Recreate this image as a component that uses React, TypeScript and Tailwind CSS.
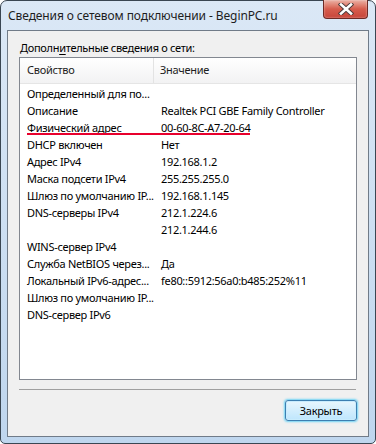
const FONT = "font-['Noto_Sans',sans-serif]";

const ROWS: [string, string][] = [
  ["Определенный для по...", ""],
  ["Описание", "Realtek PCI GBE Family Controller"],
  ["Физический адрес", "00-60-8C-A7-20-64"],
  ["DHCP включен", "Нет"],
  ["Адрес IPv4", "192.168.1.2"],
  ["Маска подсети IPv4", "255.255.255.0"],
  ["Шлюз по умолчанию IP...", "192.168.1.145"],
  ["DNS-серверы IPv4", "212.1.224.6"],
  ["", "212.1.244.6"],
  ["WINS-сервер IPv4", ""],
  ["Служба NetBIOS через...", "Да"],
  ["Локальный IPv6-адрес...", "fe80::5912:56a0:b485:252%11"],
  ["Шлюз по умолчанию IP...", ""],
  ["DNS-сервер IPv6", ""],
];

function CloseButton() {
  return (
    <div className="w-[45px] h-[19px] rounded-b-[4px] border border-t-0 border-[#6d2a25] bg-gradient-to-b from-[#eab1a5] via-[#d65c4d] to-[#c7453a] flex items-center justify-center shadow-[inset_0_0_2px_rgba(255,255,255,0.6)]">
      <svg width="16" height="12" viewBox="0 0 16 12">
        <path
          d="M3 1.5 L13 10.5 M13 1.5 L3 10.5"
          stroke="#4a3a3a"
          strokeWidth="4.5"
          strokeLinecap="square"
        />
        <path
          d="M3 1.5 L13 10.5 M13 1.5 L3 10.5"
          stroke="#ffffff"
          strokeWidth="2.6"
          strokeLinecap="square"
        />
      </svg>
    </div>
  );
}

export default function App() {
  return (
    <div className={`w-[376px] h-[444px] bg-white ${FONT}`}>
      <div className="w-full h-full rounded-t-[7px] rounded-b-[5px] border border-[#3a4652] bg-gradient-to-b from-[#dbe8f6] to-[#bfd6ee] flex flex-col px-[6px] pb-[6px]">
        {/* title bar */}
        <div className="h-[29px] flex items-start justify-between">
          <span className="pt-[7px] pl-[1px] text-[12px] leading-[16px] tracking-[-0.1px] text-[#1e1e1e]">
            Сведения о сетевом подключении - BeginPC.ru
          </span>
          <div className="-mt-px mr-[1px]">
            <CloseButton />
          </div>
        </div>

        {/* client area */}
        <div className="flex-1 border border-[#707b88] bg-[#f0f0f0] flex flex-col px-[11px] text-[11px] tracking-[-0.3px] text-black">
          <div className="pt-[9px] h-[26px] pl-[1px] leading-[15px]">
            Дополн<span className="underline underline-offset-2">и</span>тельные сведения о сети:
          </div>

          <div className="h-[323px] border border-[#828790] bg-white flex flex-col">
            <div className="h-[26px] flex bg-gradient-to-b from-white to-[#f2f2f3] border-b border-[#e5e5e5] text-[#1e1e1e]">
              <div className="w-[134px] border-r border-[#e3e3e3] pl-[7px] flex items-center">
                Свойство
              </div>
              <div className="flex-1 pl-[6px] flex items-center">Значение</div>
            </div>
            <div className="pt-[1px]">
              {ROWS.map(([k, v], i) => (
                <div key={i} className="relative h-[17px] flex items-center leading-[17px]">
                  <div className="w-[134px] pl-[7px] whitespace-nowrap">{k}</div>
                  <div className="flex-1 pl-[7px] whitespace-nowrap">{v}</div>
                  {i === 2 && (
                    <div className="absolute left-[7px] top-[14px] w-[223px] h-[2px] bg-[#e8002d]" />
                  )}
                </div>
              ))}
            </div>
          </div>

          <div className="mt-[9px] h-px bg-[#a0a0a0] mr-[1px]" />

          <div className="flex justify-end pt-[10px]">
            <button className="w-[72px] h-[21px] rounded-[3px] border border-[#3c7fb1] bg-gradient-to-b from-[#e8f6fd] to-[#bee6fd] shadow-[0_0_2px_1px_#6fd3f5,inset_0_0_0_1px_#c9ecfd] text-[11px] leading-[18px] text-black">
              Закрыть
            </button>
          </div>
        </div>
      </div>
    </div>
  );
}
